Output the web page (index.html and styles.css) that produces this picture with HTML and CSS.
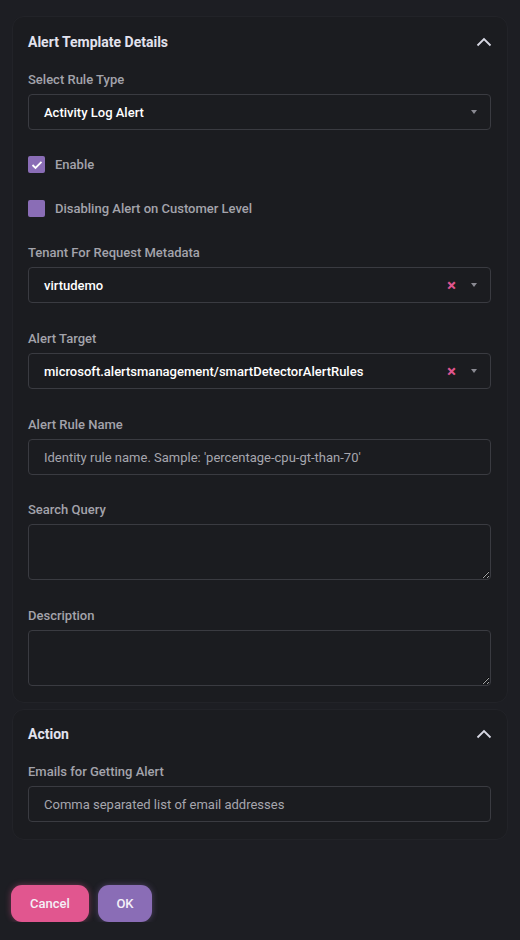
FILE: index.html
```html
<!DOCTYPE html>
<html lang="en">
<head>
<meta charset="utf-8">
<link rel="stylesheet" href="styles.css">
</head>
<body>
<div class="page">
  <section class="card">
    <div class="card-head">
      <h2>Alert Template Details</h2>
      <svg class="chev" width="16" height="10" viewBox="0 0 16 10"><path d="M1.5 8.5 L8 2 L14.5 8.5" fill="none" stroke="#d8d8e4" stroke-width="1.8"/></svg>
    </div>
    <div class="field first">
      <label>Select Rule Type</label>
      <div class="control select"><span class="val">Activity Log Alert</span><span class="caret"></span></div>
    </div>
    <div class="check-row first-check"><span class="box checked"><svg width="12" height="10" viewBox="0 0 12 10"><path d="M1.5 5 L4.5 8 L10.5 1.8" fill="none" stroke="#fff" stroke-width="1.8"/></svg></span><span class="check-label">Enable</span></div>
    <div class="check-row"><span class="box"></span><span class="check-label">Disabling Alert on Customer Level</span></div>
    <div class="field">
      <label>Tenant For Request Metadata</label>
      <div class="control select"><span class="val">virtudemo</span><span class="clear">×</span><span class="caret"></span></div>
    </div>
    <div class="field">
      <label>Alert Target</label>
      <div class="control select"><span class="val">microsoft.alertsmanagement/smartDetectorAlertRules</span><span class="clear">×</span><span class="caret"></span></div>
    </div>
    <div class="field">
      <label>Alert Rule Name</label>
      <input class="control input" placeholder="Identity rule name. Sample: 'percentage-cpu-gt-than-70'">
    </div>
    <div class="field tight">
      <label>Search Query</label>
      <textarea class="control area"></textarea>
    </div>
    <div class="field">
      <label>Description</label>
      <textarea class="control area"></textarea>
    </div>
  </section>
  <section class="card action">
    <div class="card-head">
      <h2>Action</h2>
      <svg class="chev" width="16" height="10" viewBox="0 0 16 10"><path d="M1.5 8.5 L8 2 L14.5 8.5" fill="none" stroke="#d8d8e4" stroke-width="1.8"/></svg>
    </div>
    <div class="field first">
      <label>Emails for Getting Alert</label>
      <input class="control input" placeholder="Comma separated list of email addresses">
    </div>
  </section>
  <div class="buttons">
    <button class="btn cancel">Cancel</button>
    <button class="btn ok">OK</button>
  </div>
</div>
</body>
</html>
```
FILE: styles.css
```css
html, body {
  margin: 0;
  padding: 0;
  background: #1d1e23;
  color-scheme: dark;
}
body {
  font-family: Roboto, "Liberation Sans", sans-serif;
  color: #e6e6ee;
}
.page {
  padding: 16px 12px 0 12px;
}
.card {
  background: #1b1c20;
  border: 1px solid #222328;
  border-radius: 12px;
  padding: 15px 16px 16px 15px;
}
.card.action {
  margin-top: 6px;
  padding-top: 14px;
  padding-bottom: 17px;
}
.card-head {
  display: flex;
  align-items: center;
  justify-content: space-between;
  height: 20px;
}
.card-head h2 {
  margin: 0;
  font-size: 14px;
  font-weight: 700;
  color: #e2e2ee;
}
.chev {
  margin-right: -1px;
}
.field {
  display: flex;
  flex-direction: column;
  margin-top: 27px;
}
.field.tight {
  margin-top: 26px;
}
.field.first {
  margin-top: 19px;
}
.field label {
  font-size: 13px;
  font-weight: 500;
  color: #a3a3ab;
  line-height: 16px;
  padding-top: 1px;
  margin-bottom: 6px;
}
.control {
  box-sizing: border-box;
  width: 100%;
  background: #1b1c20;
  border: 1px solid #3a3b41;
  border-radius: 4px;
  height: 36px;
  font-family: Roboto, "Liberation Sans", sans-serif;
  font-size: 13px;
  margin: 0;
}
.select {
  display: flex;
  align-items: center;
  padding: 0 13px 0 15px;
}
.select .val {
  flex: 1;
  color: #ffffff;
  font-weight: 500;
}
.clear {
  color: #e0558f;
  font-size: 17px;
  font-weight: 700;
  line-height: 1;
  margin-right: 15px;
}
.caret {
  width: 0;
  height: 0;
  border-left: 3px solid transparent;
  border-right: 3px solid transparent;
  border-top: 4px solid #8a8a92;
}
.input {
  padding: 0 15px;
  color: #fff;
  outline: none;
}
.input::placeholder {
  color: #a6a6ae;
}
.area {
  height: 56px;
  resize: vertical;
  padding: 8px 15px;
  color: #fff;
  outline: none;
}
.check-row {
  display: flex;
  align-items: center;
  margin-top: 27px;
  height: 17px;
}
.check-row.first-check {
  margin-top: 26px;
}
.box {
  box-sizing: border-box;
  width: 17px;
  height: 17px;
  border-radius: 2px;
  background: #8a6db6;
  display: flex;
  align-items: center;
  justify-content: center;
}
.check-label {
  margin-left: 10px;
  font-size: 13px;
  font-weight: 500;
  color: #a3a3ab;
}
.buttons {
  display: flex;
  gap: 9px;
  margin-top: 45px;
  margin-left: -1px;
}
.btn {
  border: none;
  height: 37px;
  border-radius: 11px;
  font-family: Roboto, "Liberation Sans", sans-serif;
  font-size: 13px;
  font-weight: 500;
  color: #f4f0f8;
  cursor: pointer;
}
.cancel {
  width: 78px;
  background: #e1568f;
  box-shadow: 0 0 6px rgba(225, 86, 143, 0.45);
}
.ok {
  width: 54px;
  background: #8a6db6;
  box-shadow: 0 0 6px rgba(138, 109, 182, 0.45);
}
```
